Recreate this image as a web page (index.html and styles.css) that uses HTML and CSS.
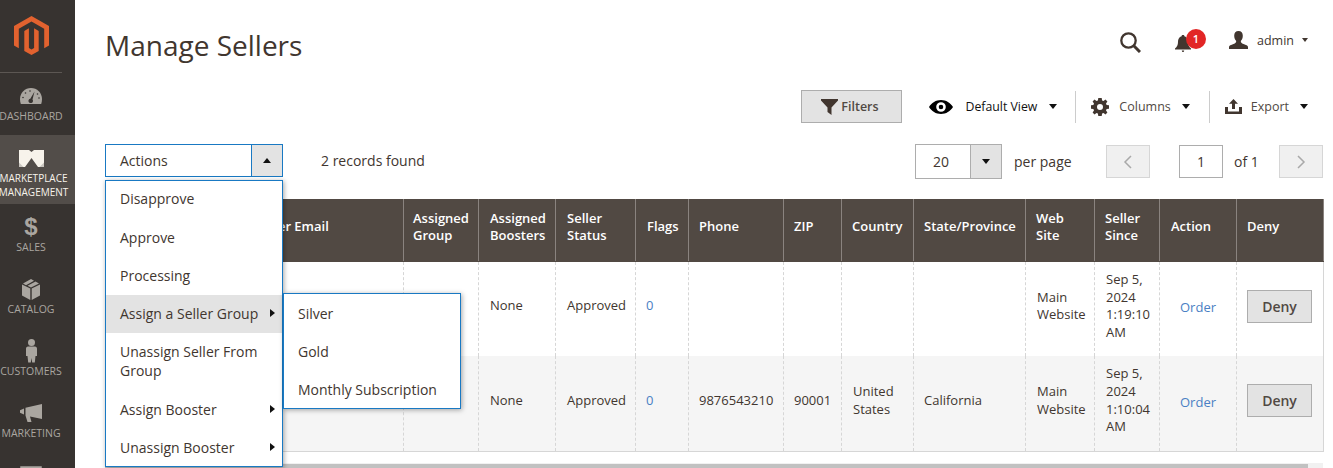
FILE: index.html
```html
<!DOCTYPE html>
<html lang="en">
<head>
    <meta charset="UTF-8">
    <title>Manage Sellers</title>
    <link rel="stylesheet" href="styles.css">
</head>
<body>
    <nav class="sidebar">
        <div class="logo">
            <svg width="35" height="39" viewBox="0 0 35 39">
                <path fill="#e2622f" d="M17.5 0L0 10V29.500L4.800 32.300V12.700L17.500 5.500L30.200 12.700V32.300L35 29.500V10Z"/>
                <path fill="#e2622f" d="M17.500 39L10.300 34.900V14.900L14.900 12.300V32.100L17.500 33.600L20.100 32.100V12.300L24.700 14.900V34.900Z"/>
            </svg>
        </div>
        <a class="nav-item">
            <span class="nav-icon">
                <svg width="22" height="16" viewBox="0 0 22 16">
                    <path fill="#aaa6a0" d="M11 0C5 0 0 4.800 0 11C0 12.600 .3 14.300 .8 16H21.200C21.700 14.300 22 12.600 22 11C22 4.800 17 0 11 0Z"/>
                    <path fill="#373330" d="M14.500 3.500L12.500 11.500C13.500 12.500 13 14.500 11.500 15C10.500 15.300 9 15 8.500 13.500C8.200 12.300 9 11 10.300 10.800Z"/>
                    <g fill="#373330"><circle cx="10" cy="3" r=".8"/><circle cx="5.500" cy="5" r=".8"/><circle cx="3" cy="9.500" r=".8"/><circle cx="17.500" cy="6" r=".8"/><circle cx="19" cy="10" r=".8"/></g>
                </svg>
            </span>
            <span class="nav-label">Dashboard</span>
        </a>
        <a class="nav-item active">
            <span class="nav-icon">
                <svg width="25" height="17" viewBox="0 0 25 17">
                    <path fill="#f7f3eb" d="M0 0H10L12.500 2L15 0H25V17H19L12.500 8L6 17H0Z"/>
                    <path fill="#c9c5bf" d="M0 17V12.500L4.500 17ZM25 17V12.500L20.500 17Z"/>
                </svg>
            </span>
            <span class="nav-label">Marketplace<br>Management</span>
        </a>
        <a class="nav-item">
            <span class="nav-icon nav-dollar">$</span>
            <span class="nav-label">Sales</span>
        </a>
        <a class="nav-item">
            <span class="nav-icon">
                <svg width="18" height="21" viewBox="0 0 18 21">
                    <path fill="#aaa6a0" d="M8.300 9.500V21L0 16.500V5.500ZM9.700 9.500V21L18 16.500V5.500ZM9 0L12 1.700L4 6.200L1 4.500ZM13.500 2.500L17 4.500L9 8.600L5.500 6.800Z"/>
                </svg>
            </span>
            <span class="nav-label">Catalog</span>
        </a>
        <a class="nav-item">
            <span class="nav-icon">
                <svg width="11" height="24" viewBox="0 0 11 24">
                    <circle fill="#aaa6a0" cx="5.500" cy="3.500" r="3.500"/>
                    <path fill="#aaa6a0" d="M2 7.500H9C10.200 7.500 11 8.500 11 9.700V17H9.500L8.800 23.500H6.200L5.500 19L4.800 23.500H2.200L1.500 17H0V9.700C0 8.500 .8 7.500 2 7.500Z"/>
                </svg>
            </span>
            <span class="nav-label">Customers</span>
        </a>
        <a class="nav-item">
            <span class="nav-icon">
                <svg width="22" height="18" viewBox="0 0 22 18">
                    <path fill="#aaa6a0" d="M22 0V15L10 12.500L11.500 18H7.500L5.500 11.500V3.800ZM4 4.500V10.500L0 8.700V6.300Z"/>
                </svg>
            </span>
            <span class="nav-label">Marketing</span>
        </a>
        <a class="nav-item">
            <span class="nav-icon">
                <svg width="22" height="18" viewBox="0 0 22 18">
                    <path fill="none" stroke="#aaa6a0" stroke-width="2.500" d="M1.500 1.500H20.500V14H1.500Z"/>
                </svg>
            </span>
        </a>
    </nav>

    <main class="content">
        <header class="page-header">
            <h1>Manage Sellers</h1>
            <div class="header-actions">
                <svg class="search-icon" width="21" height="21" viewBox="0 0 21 21">
                    <circle cx="8.500" cy="8.500" r="7.200" fill="none" stroke="#41362f" stroke-width="2.300"/>
                    <path d="M13.800 13.800L20 20" stroke="#41362f" stroke-width="3"/>
                </svg>
                <span class="bell">
                    <svg width="16" height="17" viewBox="0 0 16 17">
                        <path fill="#41362f" d="M8 0C9 0 9.400 .5 9.400 1.300C12 2 13 4.500 13 7C13 10 14 12 16 13.500V14.500H0V13.500C2 12 3 10 3 7C3 4.500 4 2 6.600 1.300C6.600 .5 7 0 8 0ZM6.800 15.500H9.200C9.200 16.400 8.700 17 8 17C7.300 17 6.800 16.400 6.800 15.500Z"/>
                    </svg>
                    <span class="badge">1</span>
                </span>
                <span class="user">
                    <svg width="19" height="18" viewBox="0 0 19 18">
                        <path fill="#41362f" d="M9.500 0C12.300 0 13.800 2 13.800 4.800C13.800 7.300 12.800 9 11.800 10C11.800 11.500 12.500 12.200 14.500 13C17 14 19 14.500 19 16V18H0V16C0 14.500 2 14 4.500 13C6.500 12.200 7.200 11.500 7.200 10C6.200 9 5.200 7.300 5.200 4.800C5.200 2 6.700 0 9.500 0Z"/>
                    </svg>
                    <span class="user-name">admin</span>
                    <span class="caret"></span>
                </span>
            </div>
        </header>

        <div class="toolbar">
            <button class="btn-filters">
                <svg width="17" height="16" viewBox="0 0 17 16"><path fill="#41362f" d="M0 0H17V1.500L10.500 8.500V16L6.500 13V8.500L0 1.500Z"/></svg>
                Filters
            </button>
            <div class="tool tool-view">
                <svg width="24" height="14" viewBox="0 0 24 14">
                    <path fill-rule="evenodd" d="M12 0C17 0 21.500 2.800 24 7C21.500 11.200 17 14 12 14C7 14 2.500 11.200 0 7C2.500 2.800 7 0 12 0ZM12 2.200A4.800 4.800 0 1 0 12 11.800A4.800 4.800 0 1 0 12 2.200ZM12 4.700A2.300 2.300 0 1 1 12 9.300A2.300 2.300 0 1 1 12 4.700Z"/>
                </svg>
                <span class="tool-view-text">Default View</span>
                <span class="caret dark"></span>
            </div>
            <div class="tool tool-columns">
                <svg width="18" height="18" viewBox="0 0 18 18">
                    <path fill="#41362f" fill-rule="evenodd" d="M7.300 0H10.700L11.100 2.400L12.500 3L14.500 1.600L16.400 3.500L15 5.500L15.600 6.900L18 7.300V10.700L15.600 11.100L15 12.500L16.400 14.500L14.500 16.400L12.500 15L11.100 15.600L10.700 18H7.300L6.900 15.600L5.500 15L3.500 16.400L1.600 14.500L3 12.500L2.400 11.100L0 10.700V7.300L2.400 6.900L3 5.500L1.600 3.500L3.500 1.600L5.500 3L6.900 2.400ZM9 6A3 3 0 1 0 9 12A3 3 0 1 0 9 6Z"/>
                </svg>
                <span class="tool-text">Columns</span>
                <span class="caret dark"></span>
            </div>
            <div class="tool tool-export">
                <svg width="17" height="15" viewBox="0 0 17 15">
                    <path fill="#41362f" d="M8.500 0L13 4.800H10V10H7V4.800H4ZM0 8H3V12.500H14V8H17V15H0Z"/>
                </svg>
                <span class="tool-text">Export</span>
                <span class="caret dark"></span>
            </div>
        </div>

        <div class="grid-bar">
            <div class="actions">
                <div class="actions-select">
                    <span class="actions-value">Actions</span>
                    <span class="actions-toggle"><span class="caret up"></span></span>
                </div>
                <ul class="menu">
                    <li class="first">Disapprove</li>
                    <li>Approve</li>
                    <li>Processing</li>
                    <li class="has-sub current">Assign a Seller Group</li>
                    <li class="wrapped">Unassign Seller From Group</li>
                    <li class="has-sub">Assign Booster</li>
                    <li class="has-sub last">Unassign Booster</li>
                </ul>
                <ul class="menu submenu">
                    <li>Silver</li>
                    <li>Gold</li>
                    <li>Monthly Subscription</li>
                </ul>
            </div>
            <span class="records">2 records found</span>
            <div class="pager">
                <div class="per-page">
                    <span class="per-page-value">20</span>
                    <span class="per-page-toggle"><span class="caret dark"></span></span>
                </div>
                <span class="per-page-label">per page</span>
                <button class="page-btn prev">
                    <svg width="10" height="14" viewBox="0 0 10 14"><path d="M8 1L2 7L8 13" fill="none" stroke="#a9a9a9" stroke-width="1.500"/></svg>
                </button>
                <span class="page-input">1</span>
                <span class="page-total">of 1</span>
                <button class="page-btn next">
                    <svg width="10" height="14" viewBox="0 0 10 14"><path d="M2 1L8 7L2 13" fill="none" stroke="#a9a9a9" stroke-width="1.500"/></svg>
                </button>
            </div>
        </div>

        <table class="grid">
            <colgroup>
                <col class="c-name"><col class="c-email"><col class="c-group"><col class="c-boost"><col class="c-status">
                <col class="c-flags"><col class="c-phone"><col class="c-zip"><col class="c-country"><col class="c-state">
                <col class="c-site"><col class="c-since"><col class="c-action"><col class="c-deny">
            </colgroup>
            <thead>
                <tr>
                    <th></th>
                    <th>Seller Email</th>
                    <th class="tight">Assigned Group</th>
                    <th class="wide">Assigned Boosters</th>
                    <th class="wide">Seller Status</th>
                    <th class="wide">Flags</th>
                    <th>Phone</th>
                    <th>ZIP</th>
                    <th>Country</th>
                    <th>State/Province</th>
                    <th>Web Site</th>
                    <th>Seller Since</th>
                    <th class="wide">Action</th>
                    <th>Deny</th>
                </tr>
            </thead>
            <tbody>
                <tr>
                    <td></td>
                    <td></td>
                    <td></td>
                    <td class="wide">None</td>
                    <td class="wide">Approved</td>
                    <td><a>0</a></td>
                    <td></td>
                    <td></td>
                    <td></td>
                    <td></td>
                    <td class="wide">Main Website</td>
                    <td class="wide">Sep 5, 2024 1:19:10 AM</td>
                    <td class="order"><a>Order</a></td>
                    <td class="deny"><button class="btn-deny">Deny</button></td>
                </tr>
                <tr class="alt">
                    <td></td>
                    <td></td>
                    <td></td>
                    <td class="wide">None</td>
                    <td class="wide">Approved</td>
                    <td><a>0</a></td>
                    <td>9876543210</td>
                    <td>90001</td>
                    <td class="wide">United States</td>
                    <td>California</td>
                    <td class="wide">Main Website</td>
                    <td class="wide">Sep 5, 2024 1:10:04 AM</td>
                    <td class="order"><a>Order</a></td>
                    <td class="deny"><button class="btn-deny">Deny</button></td>
                </tr>
            </tbody>
        </table>
        <div class="scrollbar">
            <div class="scrollbar-thumb"></div>
            <span class="scrollbar-arrow"></span>
        </div>
    </main>
</body>
</html>
```

FILE: styles.css
```css
* {
    box-sizing: border-box;
}

html, body {
    height: 100%;
}

body {
    margin: 0;
    display: flex;
    overflow: hidden;
    background-color: #fff;
    color: #41362f;
    font-family: "Open Sans", sans-serif;
    font-size: 14px;
}

ul {
    margin: 0;
    padding: 0;
    list-style: none;
}

button {
    font-family: inherit;
}

/* sidebar */
.sidebar {
    flex: 0 0 75px;
    height: 100%;
    overflow: hidden;
    background-color: #373330;
}

.logo {
    width: 62px;
    height: 73px;
    margin-right: 13px;
    padding-top: 16px;
    padding-left: 14px;
    border-bottom: 1px solid #5c5753;
}

.logo svg {
    display: block;
}

.nav-item {
    display: flex;
    flex-direction: column;
    align-items: center;
    width: 75px;
    padding: 10px 13px 12px 0;
    color: #aaa6a0;
}

.nav-item.active {
    padding-bottom: 5px;
    background-color: #524d49;
    color: #f7f3eb;
}

.nav-item.active .nav-label {
    margin-left: 5px;
    font-size: 10px;
}

.nav-icon {
    display: flex;
    align-items: center;
    justify-content: center;
    height: 26px;
}

.nav-dollar {
    font-family: "Liberation Sans", sans-serif;
    font-size: 24px;
    font-weight: 700;
}

.nav-label {
    font-size: 10.5px;
    line-height: 14px;
    text-align: center;
    text-transform: uppercase;
    white-space: nowrap;
}

/* main */
.content {
    flex: 1;
    min-width: 0;
    padding: 23px 10px 0 30px;
}

.page-header {
    display: flex;
    align-items: center;
    justify-content: space-between;
    height: 46px;
    padding-right: 15px;
}

h1 {
    margin: 0 0 2px;
    font-size: 28px;
    font-weight: 400;
    line-height: 44px;
}

.header-actions {
    display: flex;
    align-items: center;
    margin-bottom: 10px;
}

.search-icon {
    margin: 2px 34px 0 0;
}

.bell {
    position: relative;
    display: flex;
    margin: 4px 38px 0 0;
}

.badge {
    position: absolute;
    top: -6px;
    left: 11px;
    width: 20px;
    height: 20px;
    border-radius: 50%;
    background-color: #e22626;
    color: #fff;
    font-size: 11px;
    font-weight: 600;
    line-height: 20px;
    text-align: center;
}

.user {
    display: flex;
    align-items: center;
    margin-bottom: 2px;
}

.user-name {
    margin: 0 8px 0 9px;
    font-size: 12.500px;
}

.caret {
    display: inline-block;
    width: 0;
    height: 0;
    border-left: 4.5px solid transparent;
    border-right: 4.5px solid transparent;
    border-top: 5px solid #41362f;
}

.user .caret {
    border-left-width: 3.5px;
    border-right-width: 3.5px;
    border-top-width: 4px;
}

.caret.dark {
    border-top-color: #111;
}

.caret.up {
    border-top: 0;
    border-bottom: 5px solid #111;
}

/* toolbar */
.toolbar {
    display: flex;
    align-items: center;
    justify-content: flex-end;
    height: 33px;
    margin-top: 21px;
    padding-right: 15px;
    font-size: 13px;
}

.btn-filters {
    display: flex;
    align-items: center;
    justify-content: center;
    gap: 3px;
    width: 101px;
    height: 33px;
    margin-right: 27px;
    padding: 0 4px 0 0;
    border: 1px solid #adadad;
    background-color: #e3e3e3;
    color: #514943;
    font-size: 12.500px;
    font-weight: 600;
}

.tool {
    display: flex;
    align-items: center;
    height: 32px;
}

.tool-view {
    padding-right: 18px;
    border-right: 1px solid #ccc;
    color: #111;
}

.tool-view-text {
    margin: 0 12px;
    font-size: 12.300px;
}

.tool-columns {
    padding: 0 19px 0 15px;
    border-right: 1px solid #ccc;
}

.tool-export {
    padding-left: 15px;
}

.tool-text {
    margin: 0 11px 0 10px;
    color: #514943;
    font-size: 12.500px;
}

.tool-export .tool-text {
    margin: 0 11px 0 9px;
}

/* actions and pager */
.grid-bar {
    display: flex;
    align-items: flex-start;
    height: 35px;
    margin-top: 21px;
}

.actions {
    position: relative;
    width: 178px;
    height: 33px;
    margin-right: 38px;
}

.actions-select {
    display: flex;
    height: 33px;
    border: 1px solid #1979c3;
}

.actions-value {
    flex: 1;
    padding-left: 14px;
    line-height: 31px;
}

.actions-toggle {
    display: flex;
    align-items: center;
    justify-content: center;
    width: 31px;
    border-left: 1px solid #1979c3;
    background-color: #e3e3e3;
}

.menu {
    position: absolute;
    z-index: 2;
    top: 36px;
    left: 0;
    width: 178px;
    border: 1px solid #1979c3;
    background-color: #fff;
    box-shadow: 1px 1px 5px rgba(0, 0, 0, 0.35);
}

.menu li {
    position: relative;
    padding: 9px 14px 10px;
    line-height: 19px;
}

.menu .first {
    padding: 8px 14px 11px;
}

.menu .wrapped {
    padding-bottom: 11px;
}

.menu .last {
    padding-bottom: 9px;
}

.menu .current {
    background-color: #e3e3e3;
}

.has-sub::after {
    content: "";
    position: absolute;
    top: 14px;
    right: 7px;
    border-top: 4px solid transparent;
    border-bottom: 4px solid transparent;
    border-left: 5px solid #111;
}

.submenu {
    top: 149px;
    left: 178px;
    width: 178px;
}

.submenu li {
    padding: 10px 14px 9px;
}

.records {
    flex: 1;
    line-height: 33px;
}

.pager {
    display: flex;
    align-items: center;
    height: 35px;
}

.per-page {
    display: flex;
    width: 87px;
    height: 35px;
    border: 1px solid #adadad;
}

.per-page-value {
    flex: 1;
    padding-left: 17px;
    line-height: 33px;
}

.per-page-toggle {
    display: flex;
    align-items: center;
    justify-content: center;
    width: 31px;
    border-left: 1px solid #adadad;
    background-color: #e3e3e3;
}

.per-page-label {
    width: 104px;
    padding-left: 12px;
}

.page-btn {
    display: flex;
    align-items: center;
    justify-content: center;
    width: 44px;
    height: 33px;
    padding: 0;
    border: 1px solid #d6d6d6;
    background-color: #f0f0f0;
}

.page-input {
    width: 44px;
    height: 33px;
    margin-left: 29px;
    border: 1px solid #adadad;
    line-height: 31px;
    text-align: center;
}

.page-total {
    width: 56px;
    padding-left: 11px;
}

/* table */
.grid {
    width: 1218px;
    margin-top: 20px;
    border-collapse: collapse;
    table-layout: fixed;
    font-size: 13px;
}

.c-name { width: 140px; }
.c-email { width: 158px; }
.c-group { width: 75px; }
.c-boost { width: 77px; }
.c-status { width: 80px; }
.c-flags { width: 53px; }
.c-phone { width: 95px; }
.c-zip { width: 58px; }
.c-country { width: 72px; }
.c-state { width: 112px; }
.c-site { width: 69px; }
.c-since { width: 65px; }
.c-action { width: 77px; }
.c-deny { width: 87px; }

.grid th {
    height: 62px;
    padding: 0 10px 8px;
    border: 1px solid #8a837f;
    border-top-color: #514943;
    border-bottom-color: #514943;
    background-color: #514943;
    color: #fff;
    font-weight: 600;
    line-height: 17px;
    text-align: left;
}

.grid td {
    padding: 9px 10px 15px;
    border-left: 1px dashed #d6d6d6;
    border-right: 1px dashed #d6d6d6;
    line-height: 17.600px;
    vertical-align: middle;
}

.grid th.tight {
    padding-left: 9px;
}

.grid th.wide,
.grid td.wide {
    padding-left: 11px;
}

.grid tbody tr:last-child td {
    border-bottom: 1px solid #d6d6d6;
}

.grid td:last-child {
    border-right: 1px solid #d6d6d6;
}

.grid td:first-child {
    border-left: 1px solid #d6d6d6;
}

.grid .alt td {
    background-color: #f5f5f5;
}

.grid td.order {
    padding-bottom: 11px;
    text-align: center;
}

.grid td.deny {
    padding-top: 8px;
    padding-bottom: 14px;
}

.grid a {
    color: #4a80c4;
}

.btn-deny {
    width: 65px;
    height: 33px;
    padding: 0;
    border: 1px solid #adadad;
    background-color: #e3e3e3;
    color: #514943;
    font-size: 14px;
    font-weight: 600;
}

.scrollbar {
    display: flex;
    align-items: flex-start;
    width: 1218px;
    height: 8px;
    margin-top: 11px;
    padding-top: 1px;
    background-color: #f1f1f1;
}

.scrollbar-thumb {
    flex: 1;
    height: 7px;
    background-color: #c1c1c1;
}

.scrollbar-arrow {
    width: 15px;
}
```
